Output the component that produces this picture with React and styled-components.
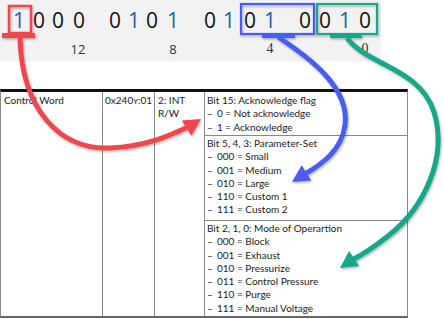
import React from 'react'
import styled, {createGlobalStyle} from 'styled-components'

const GlobalStyle = createGlobalStyle`
  html, body {
    margin: 0;
    padding: 0;
    background: #fff;
  }
  body {
    width: 444px;
    height: 319px;
    overflow: hidden;
  }
`

// centre x of each bit digit, as measured on the register strip
const BITS = [
  {v: '1', x: 19, hi: true},
  {v: '0', x: 39},
  {v: '0', x: 58},
  {v: '0', x: 79},
  {v: '0', x: 115},
  {v: '1', x: 134, hi: true},
  {v: '0', x: 152},
  {v: '1', x: 173, hi: true},
  {v: '0', x: 210},
  {v: '1', x: 229, hi: true},
  {v: '0', x: 250},
  {v: '1', x: 270, hi: true},
  {v: '0', x: 305},
  {v: '0', x: 325},
  {v: '1', x: 345, hi: true},
  {v: '0', x: 365},
]

const BIT_LABELS = [
  {v: '12', x: 78},
  {v: '8', x: 173},
  {v: '4', x: 270, serif: true},
  {v: '0', x: 365, serif: true},
]

const Page = styled.div`
  position: relative;
  width: 444px;
  height: 319px;
  display: flex;
  flex-direction: column;
`

const Register = styled.div`
  width: 381px;
  height: 62px;
  box-sizing: border-box;
  background: #f2f2f2;
  border-bottom: 1px solid #fbfbfb;
  display: flex;
  flex-direction: column;
`

const BitRow = styled.div`
  display: flex;
  align-items: center;
  height: 40px;
  font-family: 'Open Sans', 'Noto Sans', sans-serif;
  font-size: 21px;
`

const Digit = styled.span`
  width: 12px;
  margin-left: ${p => p.$gap}px;
  text-align: center;
  color: ${p => (p.$hi ? '#1f5fa6' : '#111')};
`

const LabelRow = styled.div`
  display: flex;
  align-items: center;
  height: 18px;
`

const BitLabel = styled.span`
  width: 20px;
  margin-left: ${p => p.$gap}px;
  text-align: center;
  font-family: ${p =>
    p.$serif ? "'Liberation Serif', serif" : "'Open Sans', sans-serif"};
  font-size: ${p => (p.$serif ? 14 : 13)}px;
  color: #333;
`

const Table = styled.div`
  margin-top: 27px;
  width: 408px;
  height: 229px;
  box-sizing: border-box;
  display: grid;
  grid-template-columns: 102px 52px 50px 1fr;
  border-top: 3px solid #111;
  border-left: 1px solid #888;
  border-right: 1px solid #888;
  border-bottom: 2px solid #666;
  font-family: Lato, 'Liberation Sans', sans-serif;
  font-size: 10px;
  line-height: 13.3px;
  color: #222;
`

const Cell = styled.div`
  border-right: 1px solid #888;
  padding: 2px 0 0 ${p => p.$pad}px;
`

const BitColumn = styled.div`
  display: grid;
  grid-template-rows: 44px 85px 1fr;
`

const BitBlock = styled.div`
  padding: ${p => (p.$first ? 2 : 1)}px 0 0 2px;
  border-bottom: 1px solid #888;
  &:last-child {
    border-bottom: none;
  }
`

const Item = styled.div`
  display: flex;
`

const Dash = styled.span`
  width: 10px;
`

const Overlay = styled.svg`
  position: absolute;
  left: 0;
  top: 0;
  pointer-events: none;
`

const RED = '#f0464d'
const BLUE = '#4a5cf4'
const TEAL = '#12a888'

function head(tx, ty, deg, len = 15, half = 8) {
  const a = (deg * Math.PI) / 180
  const dx = Math.cos(a)
  const dy = Math.sin(a)
  const bx = tx - dx * len
  const by = ty - dy * len
  return `${tx},${ty} ${bx - dy * half},${by + dx * half} ${bx + dy * half},${by - dx * half}`
}

const withGaps = (list, width) =>
  list.map((b, i) => {
    const left = b.x - width / 2
    const prev = i === 0 ? 0 : list[i - 1].x + width / 2
    return {...b, gap: left - prev}
  })

const Annotations = () => (
  <Overlay width="444" height="319" viewBox="0 0 444 319">
    <defs>
      <filter id="sh" x="-20%" y="-20%" width="140%" height="140%">
        <feDropShadow dx="1" dy="1.5" stdDeviation="1" floodColor="#000" floodOpacity="0.3" />
      </filter>
    </defs>
    <g filter="url(#sh)" fill="none" strokeLinecap="butt">
      <rect x="9" y="6" width="22" height="27" stroke={RED} strokeWidth="2.5" />
      <rect x="2" y="33" width="33" height="5" fill={RED} />
      <path d="M20 38 C22 110 60 150 110 148 C150 146 172 134 190 126" stroke={RED} strokeWidth="5" />
      <polygon points={head(201, 119, -32, 17, 9)} fill={RED} />

      <rect x="241" y="4" width="73" height="30" stroke={BLUE} strokeWidth="2.2" />
      <rect x="262" y="33" width="33" height="5" fill={BLUE} />
      <path d="M278 37 C310 58 350 88 345 125 C342 150 322 164 305 174" stroke={BLUE} strokeWidth="5" />
      <polygon points={head(292, 182, 148, 17, 9)} fill={BLUE} />

      <rect x="317" y="4" width="60" height="30" stroke={TEAL} strokeWidth="2.2" />
      <rect x="330" y="33" width="32" height="5" fill={TEAL} />
      <path d="M347 38 C368 66 420 68 434 112 C448 158 424 208 388 236 C374 247 364 254 352 260" stroke={TEAL} strokeWidth="5" />
      <polygon points={head(340, 268, 146, 17, 9)} fill={TEAL} />
    </g>
  </Overlay>
)

const blocks = [
  {
    title: 'Bit 15: Acknowledge flag',
    items: ['0 = Not acknowledge', '1 = Acknowledge'],
  },
  {
    title: 'Bit 5, 4, 3: Parameter-Set',
    items: ['000 = Small', '001 = Medium', '010 = Large', '110 = Custom 1', '111 = Custom 2'],
  },
  {
    title: 'Bit 2, 1, 0: Mode of Operartion',
    items: [
      '000 = Block',
      '001 = Exhaust',
      '010 = Pressurize',
      '011 = Control Pressure',
      '110 = Purge',
      '111 = Manual Voltage',
    ],
  },
]

export default function App() {
  const bits = withGaps(BITS, 12)
  const labels = withGaps(BIT_LABELS, 20)
  return (
    <Page>
      <GlobalStyle />
      <Register>
        <BitRow>
          {bits.map((b, i) => (
            <Digit key={i} $gap={b.gap} $hi={b.hi}>
              {b.v}
            </Digit>
          ))}
        </BitRow>
        <LabelRow>
          {labels.map((l, i) => (
            <BitLabel key={i} $gap={l.gap} $serif={l.serif}>
              {l.v}
            </BitLabel>
          ))}
        </LabelRow>
      </Register>
      <Table>
        <Cell $pad={3}>Control Word</Cell>
        <Cell $pad={2}>0x240ʏ:01</Cell>
        <Cell $pad={3}>
          2: INT
          <br />
          R/W
        </Cell>
        <BitColumn>
          {blocks.map((b, i) => (
            <BitBlock key={b.title} $first={i === 0}>
              <div>{b.title}</div>
              {b.items.map(t => (
                <Item key={t}>
                  <Dash>–</Dash>
                  <span>{t}</span>
                </Item>
              ))}
            </BitBlock>
          ))}
        </BitColumn>
      </Table>
      <Annotations />
    </Page>
  )
}
